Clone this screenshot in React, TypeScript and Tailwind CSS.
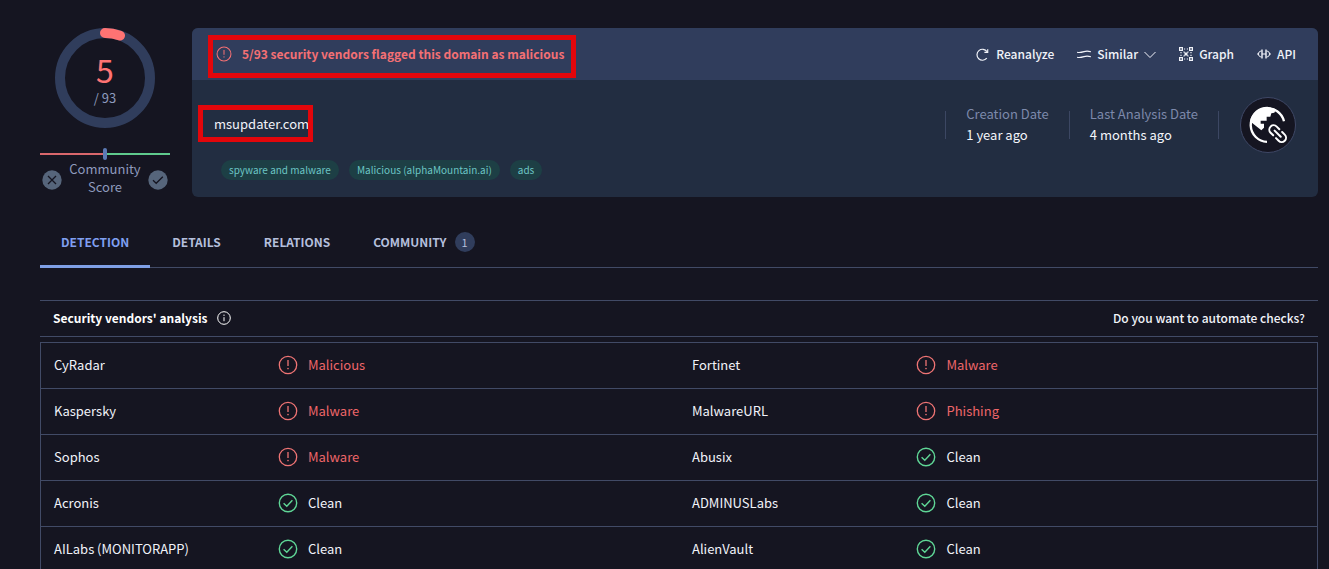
import type { ReactNode } from "react";

type Verdict = { vendor: string; result: string; clean?: boolean };

const rows: [Verdict, Verdict][] = [
  [{ vendor: "CyRadar", result: "Malicious" }, { vendor: "Fortinet", result: "Malware" }],
  [{ vendor: "Kaspersky", result: "Malware" }, { vendor: "MalwareURL", result: "Phishing" }],
  [{ vendor: "Sophos", result: "Malware" }, { vendor: "Abusix", result: "Clean", clean: true }],
  [{ vendor: "Acronis", result: "Clean", clean: true }, { vendor: "ADMINUSLabs", result: "Clean", clean: true }],
  [{ vendor: "AILabs (MONITORAPP)", result: "Clean", clean: true }, { vendor: "AlienVault", result: "Clean", clean: true }],
];

const tags = ["spyware and malware", "Malicious (alphaMountain.ai)", "ads"];

function AlertIcon({ className }: { className: string }) {
  return (
    <svg viewBox="0 0 20 20" fill="none" stroke="currentColor" strokeWidth="1.3" className={className} aria-hidden="true">
      <circle cx="10" cy="10" r="8.7" />
      <path d="M10 5v6" />
      <circle cx="10" cy="13.6" r="0.8" fill="currentColor" stroke="none" />
    </svg>
  );
}

function CheckIcon() {
  return (
    <svg viewBox="0 0 20 20" fill="none" stroke="currentColor" strokeWidth="1.4" className="size-5 text-[#5fd696]" aria-hidden="true">
      <circle cx="10" cy="10" r="8.7" />
      <path d="M5.6 10.2l3.2 3.1 5.6-6" />
    </svg>
  );
}

function ReanalyzeIcon() {
  return (
    <svg viewBox="0 0 14 14" fill="none" stroke="currentColor" strokeWidth="1.2" className="size-3.5" aria-hidden="true">
      <path d="M10.800 11.200A5.500 5.500 0 1 1 11 4.600" />
      <path d="M11.700 2.200v3.200H8.400" />
    </svg>
  );
}

function SimilarIcon() {
  return (
    <svg viewBox="0 0 14 14" fill="none" stroke="currentColor" strokeWidth="1.1" className="size-3.5" aria-hidden="true">
      <path d="M0 5.200C2.500 5.800 4.300 5.400 7 4.600S11.500 4 14 4.800" />
      <path d="M0 10.200C2.500 10.800 4.300 10.400 7 9.600S11.500 9 14 9.800" />
    </svg>
  );
}

function GraphIcon() {
  return (
    <svg viewBox="0 0 14 14" fill="none" stroke="currentColor" strokeWidth="1.2" className="size-3.5" aria-hidden="true">
      <path d="M.6.6h2.800v2.800H.6zM10.600.6h2.800v2.800h-2.800zM.6 10.600h2.800v2.800H.6zM10.600 10.600h2.800v2.800h-2.800z" />
      <path d="M5.500 5.500h3v3h-3z" fill="currentColor" stroke="none" />
      <path d="M4.600 4.600l1 1M9.400 4.600l-1 1M4.600 9.400l1-1M9.400 9.400l-1-1" />
      <path d="M5 2h1.200M7.800 2H9M5 12h1.200M7.800 12H9M2 5v1.200M2 7.800V9M12 5v1.200M12 7.800V9" />
    </svg>
  );
}

function ApiIcon() {
  return (
    <svg viewBox="0 0 14 14" fill="none" stroke="currentColor" className="size-3.5" aria-hidden="true">
      <path d="M4.500 4C2.200 4.200 1.500 5.500 1.500 7s.7 2.800 3 3M9.500 4c2.300.2 3 1.500 3 3s-.7 2.800-3 3" />
      <path d="M5 2.500v9M9 2.500v9" strokeWidth="1.400" />
      <path d="M0 7h1.500M5 7h4M12.500 7H14" strokeWidth="1.200" />
    </svg>
  );
}

function DomainIcon() {
  return (
    <svg viewBox="30 21 168 168" className="size-14 shrink-0" role="img" aria-label="Domain">
      <circle cx="114" cy="105" r="82.500" fill="#151521" stroke="#3f4866" strokeWidth="3" />
      <path d="M111 155.500A50.500 50.500 0 1 1 162 94" fill="none" stroke="#fff" strokeWidth="7" />
      <path d="M60 94C64 68 86 50 112 50l26 8-5 10-9 2-3 10h-11v12H92v9h10v12l-8 8z" fill="#fff" />
      <g transform="translate(143 131) rotate(45)" fill="none" strokeLinecap="round">
        <path d="M-6-13H-17A13 13 0 0 0-17 13H-6M6-13H17A13 13 0 0 1 17 13H6M-14 0H14" stroke="#151521" strokeWidth="13" />
        <path d="M-6-13H-17A13 13 0 0 0-17 13H-6M6-13H17A13 13 0 0 1 17 13H6M-13 0H13" stroke="#fff" strokeWidth="6" />
      </g>
    </svg>
  );
}

function ScoreGauge() {
  return (
    <div className="relative size-[100px]">
      <svg viewBox="0 0 100 100" fill="none" strokeWidth="10" className="size-full" aria-hidden="true">
        <circle cx="50" cy="50" r="45" stroke="#303d5c" />
        <path d="M50 5A45 45 0 0 1 65 7.600" stroke="#ff7373" strokeLinecap="round" />
      </svg>
      <div className="absolute inset-0 flex flex-col items-center justify-center pt-0.5">
        <span className="text-[32px] leading-[38px] text-[#ff7373]">5</span>
        <span className="text-[13px] leading-5 text-[#8e9abd]">/ 93</span>
      </div>
    </div>
  );
}

function Action({ icon, children }: { icon: ReactNode; children: ReactNode }) {
  return (
    <button type="button" className="flex items-center gap-1.5 whitespace-nowrap">
      {icon}
      {children}
    </button>
  );
}

function DateField({ label, value }: { label: string; value: string }) {
  return (
    <div className="flex items-center">
      <div className="h-7 w-px bg-[#3c4763]" />
      <dl className="px-5 pb-0.5 leading-[21px] whitespace-nowrap">
        <dt className="text-[#7d89ab]">{label}</dt>
        <dd className="text-[#f4f6fb]">{value}</dd>
      </dl>
    </div>
  );
}

function Tab({ active, children }: { active?: boolean; children: ReactNode }) {
  return (
    <button
      type="button"
      role="tab"
      aria-selected={!!active}
      className={
        active
          ? "-mb-px flex items-center border-b-[3px] border-[#7f9fe6] px-[21px] pt-0.5 text-[#7f9ff0]"
          : "-mb-px flex items-center gap-2 border-b-[3px] border-transparent px-[21px] pt-0.5 text-[#b4bfdc]"
      }
    >
      {children}
    </button>
  );
}

function VerdictCells({ item }: { item: Verdict }) {
  return (
    <>
      <td className="pb-0.5 pl-[13px]">{item.vendor}</td>
      <td className="pb-0.5 pl-3.5">
        <div className="flex items-center gap-2.5">
          {item.clean ? <CheckIcon /> : <AlertIcon className="size-5 text-[#ef7474]" />}
          <span className={item.clean ? "" : "text-[#ee6669]"}>{item.result}</span>
        </div>
      </td>
    </>
  );
}

export default function App() {
  return (
    <main className="h-screen overflow-hidden bg-[#151521] pt-7 pr-[11px] pl-10 font-['Noto_Sans_CJK_SC',sans-serif] text-[13px] leading-5 text-[#f1f3f9]">
      <section className="flex gap-[22px]">
        <aside className="flex w-[130px] shrink-0 flex-col items-center">
          <ScoreGauge />
          <div className="mt-5 flex w-full items-center" aria-hidden="true">
            <div className="h-0.5 flex-1 bg-[#d9676c]" />
            <div className="h-3 w-1 rounded-xs bg-[#5b7ab5]" />
            <div className="h-0.5 flex-1 bg-[#5fca8d]" />
          </div>
          <div className="flex w-full items-end justify-between px-0.5">
            <svg viewBox="0 0 20 20" className="mb-1.5 size-5" aria-hidden="true">
              <circle cx="10" cy="10" r="9.700" fill="#56657b" />
              <path d="M6 6l8 8M14 6l-8 8" stroke="#151521" strokeWidth="1.3" />
            </svg>
            <p className="text-center leading-[18px] text-[#8e9abd]">
              Community
              <br />
              Score
            </p>
            <svg viewBox="0 0 20 20" className="mb-1.5 size-5" aria-hidden="true">
              <circle cx="10" cy="10" r="9.700" fill="#56657b" />
              <path d="M5 10.300l3.200 3 6.600-6.600" fill="none" stroke="#151521" strokeWidth="1.3" />
            </svg>
          </div>
        </aside>

        <div className="flex-1 overflow-hidden rounded-md bg-[#222d41]">
          <header className="flex h-[52px] items-center justify-between bg-[#303d5c] pr-[22px] pl-6">
            <div className="relative flex items-center gap-2.5 text-[12px] font-bold text-[#f47074]">
              <AlertIcon className="size-4" />
              5/93 security vendors flagged this domain as malicious
              <div className="pointer-events-none absolute -top-[9px] -right-3 -bottom-[14px] -left-2 border-[5px] border-[#e3060b]" />
            </div>
            <div className="flex gap-[23px] text-[12px] font-medium">
              <Action icon={<ReanalyzeIcon />}>Reanalyze</Action>
              <Action icon={<SimilarIcon />}>
                Similar
                <svg viewBox="0 0 12 12" fill="none" stroke="currentColor" className="size-3" aria-hidden="true">
                  <path d="M.5 4L6 9.500 11.500 4" />
                </svg>
              </Action>
              <Action icon={<GraphIcon />}>Graph</Action>
              <Action icon={<ApiIcon />}>API</Action>
            </div>
          </header>

          <div className="flex items-center justify-between pt-[17px] pr-[22px] pl-[22px]">
            <h1 className="relative mb-0.5">
              msupdater.com
              <span className="pointer-events-none absolute -top-[9px] -right-1 -bottom-2 -left-4 border-[5px] border-[#e3060b]" />
            </h1>
            <div className="flex items-center">
              <DateField label="Creation Date" value="1 year ago" />
              <DateField label="Last Analysis Date" value="4 months ago" />
              <div className="mr-[21px] h-7 w-px bg-[#3c4763]" />
              <DomainIcon />
            </div>
          </div>

          <ul className="flex gap-2.5 pt-[7px] pb-[17px] pl-[29px] text-[10px] text-[#6cc5c4]">
            {tags.map((tag) => (
              <li key={tag} className="rounded-full bg-[#1d3f45] px-2">
                {tag}
              </li>
            ))}
          </ul>
        </div>
      </section>

      <div role="tablist" className="mt-5 flex h-[51px] gap-px border-b border-[#414a66] text-[12px] font-bold">
        <Tab active>DETECTION</Tab>
        <Tab>DETAILS</Tab>
        <Tab>RELATIONS</Tab>
        <Tab>
          COMMUNITY
          <span className="flex size-5 items-center justify-center rounded-full bg-[#303d5c] text-[11px] font-normal">1</span>
        </Tab>
      </div>

      <div className="mt-8 flex h-[37px] items-center justify-between border-y border-[#414a66] px-[13px] pb-0.5">
        <h2 className="flex items-center gap-2.5 text-[12px] font-bold text-white">
          Security vendors' analysis
          <svg viewBox="0 0 14 14" fill="none" stroke="currentColor" className="size-3.5" aria-hidden="true">
            <circle cx="7" cy="7" r="6.300" />
            <path d="M7 6.200v4M7 3.600v1.300" />
          </svg>
        </h2>
        <a href="#automate" className="text-[12px] font-medium">Do you want to automate checks?</a>
      </div>

      <table className="mt-[5px] w-full table-fixed border-collapse border border-[#414a66]">
        <colgroup>
          <col className="w-[17.5%]" />
          <col className="w-[32.5%]" />
          <col className="w-[17.5%]" />
          <col className="w-[32.5%]" />
        </colgroup>
        <tbody>
          {rows.map(([left, right]) => (
            <tr key={left.vendor} className="h-[46px] border-b border-[#414a66]">
              <VerdictCells item={left} />
              <VerdictCells item={right} />
            </tr>
          ))}
        </tbody>
      </table>
    </main>
  );
}
